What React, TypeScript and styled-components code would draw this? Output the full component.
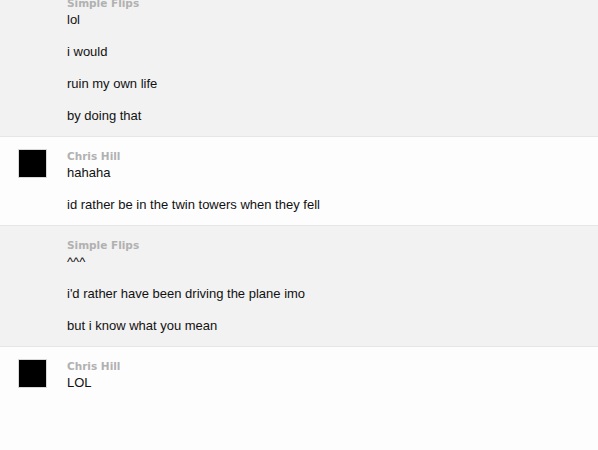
import React from "react";
import styled, { createGlobalStyle } from "styled-components";

const GlobalStyle = createGlobalStyle`
  html, body {
    margin: 0;
    padding: 0;
    background: #fdfdfd;
    overflow: hidden;
  }
`;

const Thread = styled.div`
  width: 598px;
  height: 450px;
  overflow: hidden;
  background: #fdfdfd;
  font-family: "Liberation Sans", Arial, sans-serif;
`;

const Scroller = styled.div`
  margin-top: -16px;
`;

const Group = styled.div<{ $shaded?: boolean }>`
  display: flex;
  gap: 20px;
  padding: 12px 18px 12px;
  background: ${(p) => (p.$shaded ? "#f2f2f2" : "#fdfdfd")};
  border-bottom: 1px solid #e6e6e6;

  &:last-child {
    border-bottom: none;
  }
`;

const Avatar = styled.div<{ $empty?: boolean }>`
  flex: 0 0 auto;
  width: 27px;
  height: 27px;
  background: ${(p) => (p.$empty ? "transparent" : "#000")};
  border: 1px solid ${(p) => (p.$empty ? "transparent" : "#d8d8d8")};
`;

const Body = styled.div`
  display: flex;
  flex-direction: column;
  gap: 16px;
`;

const Name = styled.div`
  font-family: "DejaVu Sans", sans-serif;
  font-weight: bold;
  font-size: 10.5px;
  line-height: 14px;
  color: #b1b1b1;
  margin-bottom: -14px;
`;

const Line = styled.div`
  font-size: 13px;
  line-height: 16px;
  color: #111;
`;

type Msg = { name: string; avatar: boolean; lines: string[] };

const messages: Msg[] = [
  { name: "Simple Flips", avatar: false, lines: ["lol", "i would", "ruin my own life", "by doing that"] },
  { name: "Chris Hill", avatar: true, lines: ["hahaha", "id rather be in the twin towers when they fell"] },
  { name: "Simple Flips", avatar: false, lines: ["^^^", "i'd rather have been driving the plane imo", "but i know what you mean"] },
  { name: "Chris Hill", avatar: true, lines: ["LOL"] },
];

const App = () => {
  return (
    <Thread>
      <GlobalStyle />
      <Scroller>
        {messages.map((m, i) => (
          <Group key={i} $shaded={!m.avatar}>
            <Avatar $empty={!m.avatar} />
            <Body>
              <Name>{m.name}</Name>
              {m.lines.map((l, j) => (
                <Line key={j}>{l}</Line>
              ))}
            </Body>
          </Group>
        ))}
      </Scroller>
    </Thread>
  );
};

export default App;
